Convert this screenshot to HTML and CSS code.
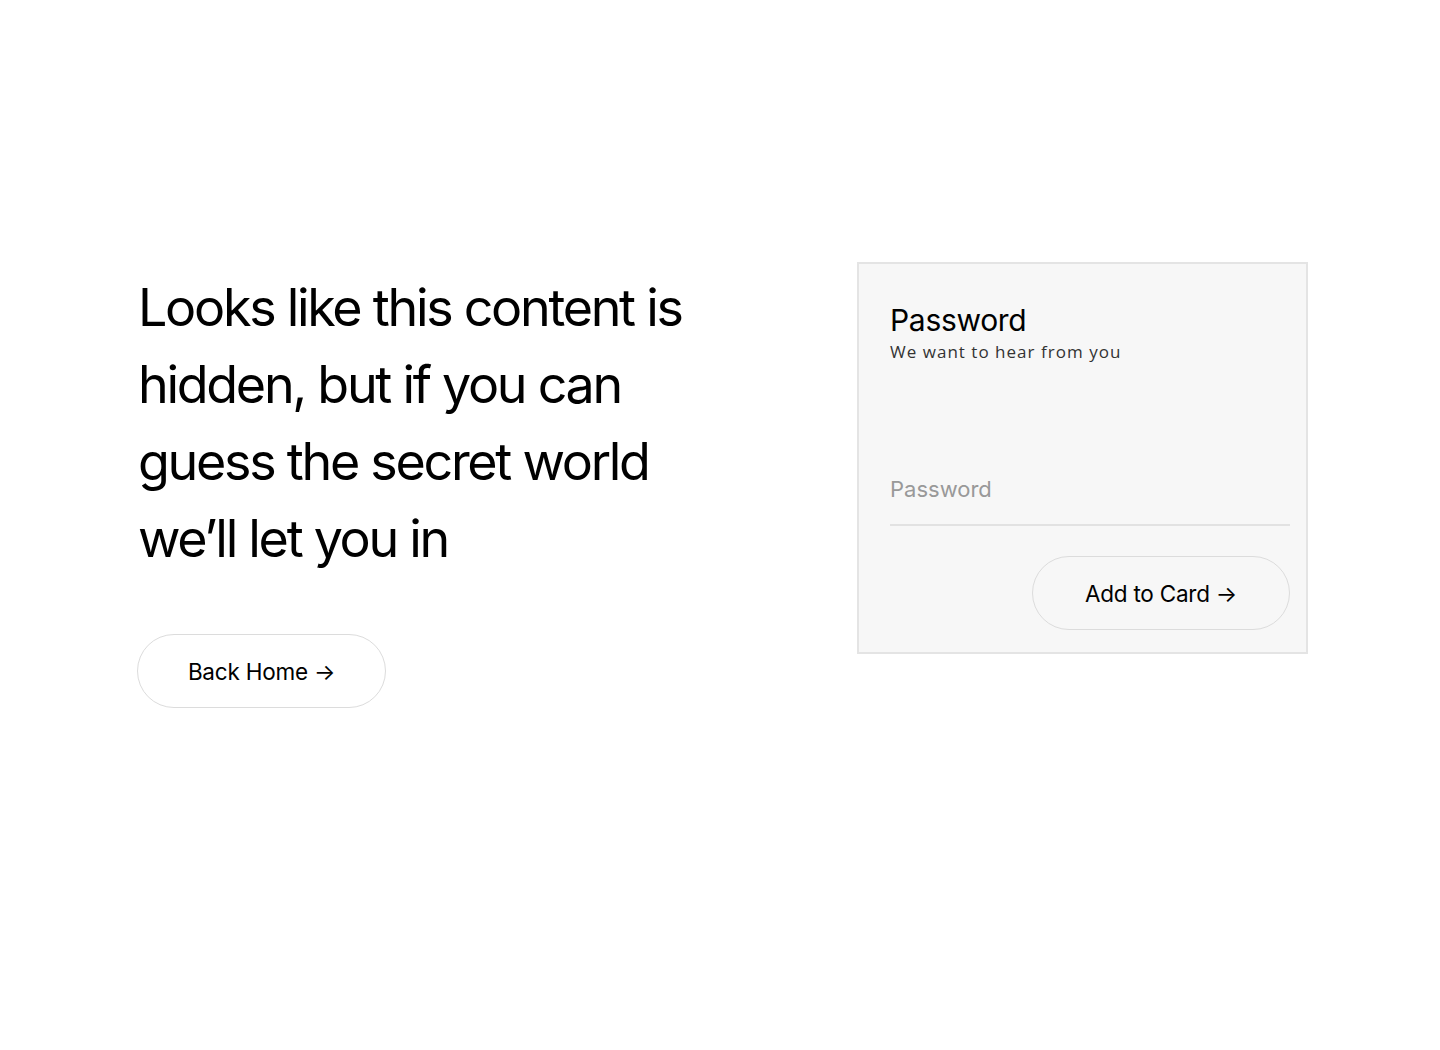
FILE: index.html
```html
<!DOCTYPE html>
<html lang="en">
<head>
    <meta charset="UTF-8">
    <title>Hidden content</title>
    <link rel="stylesheet" href="styles.css">
</head>
<body>
    <main class="page">
        <section class="intro">
            <h1 class="headline">Looks like this content is hidden, but if you can guess the secret world we’ll let you in</h1>
            <a class="pill" href="#">Back Home →</a>
        </section>
        <form class="card">
            <h2 class="cardTitle">Password</h2>
            <p class="cardSub">We want to hear from you</p>
            <input class="field" type="password" placeholder="Password">
            <div class="actions">
                <button type="button" class="pill pillCard">Add to Card →</button>
            </div>
        </form>
    </main>
</body>
</html>
```
FILE: styles.css
```css
*{
    box-sizing: border-box;
}
body{
    margin: 0;
    background: #fff;
    color: #000;
    font-family: Inter, "Liberation Sans", sans-serif;
}
.page{
    display: flex;
    justify-content: space-between;
    align-items: flex-start;
    padding: 262px 132px 0 138px;
}
.intro{
    width: 580px;
    padding-top: 7px;
}
.headline{
    margin: 0 0 57px;
    font-size: 52px;
    font-weight: 400;
    line-height: 77px;
    letter-spacing: -0.044em;
}
.pill{
    display: inline-flex;
    align-items: center;
    justify-content: center;
    width: 249px;
    height: 74px;
    margin-left: -1px;
    border: 1px solid #dcdcdc;
    border-radius: 37px;
    background: #fff;
    color: #000;
    font-family: Inter, "Liberation Sans", sans-serif;
    font-size: 22.5px;
    letter-spacing: -0.01em;
    text-decoration: none;
}
.card{
    width: 451px;
    height: 392px;
    padding: 37px 16px 0 31px;
    background: #f7f7f7;
    border: 2px solid #e4e4e4;
}
.cardTitle{
    margin: 0;
    font-size: 30px;
    font-weight: 400;
    line-height: 38px;
    letter-spacing: -0.01em;
}
.cardSub{
    margin: 1px 0 0;
    font-family: "Open Sans", sans-serif;
    font-size: 17px;
    letter-spacing: 0.06em;
    color: #333;
}
.field{
    display: block;
    width: 100%;
    margin-top: 113px;
    padding: 0 0 22px;
    border: 0;
    border-bottom: 2px solid #e2e2e2;
    background: transparent;
    font-family: Inter, "Liberation Sans", sans-serif;
    font-size: 22px;
    outline: none;
}
.field::placeholder{
    color: #999;
}
.actions{
    display: flex;
    justify-content: flex-end;
    margin-top: 30px;
}
.pillCard{
    width: 258px;
    margin-left: 0;
    background: transparent;
    cursor: pointer;
}
```
